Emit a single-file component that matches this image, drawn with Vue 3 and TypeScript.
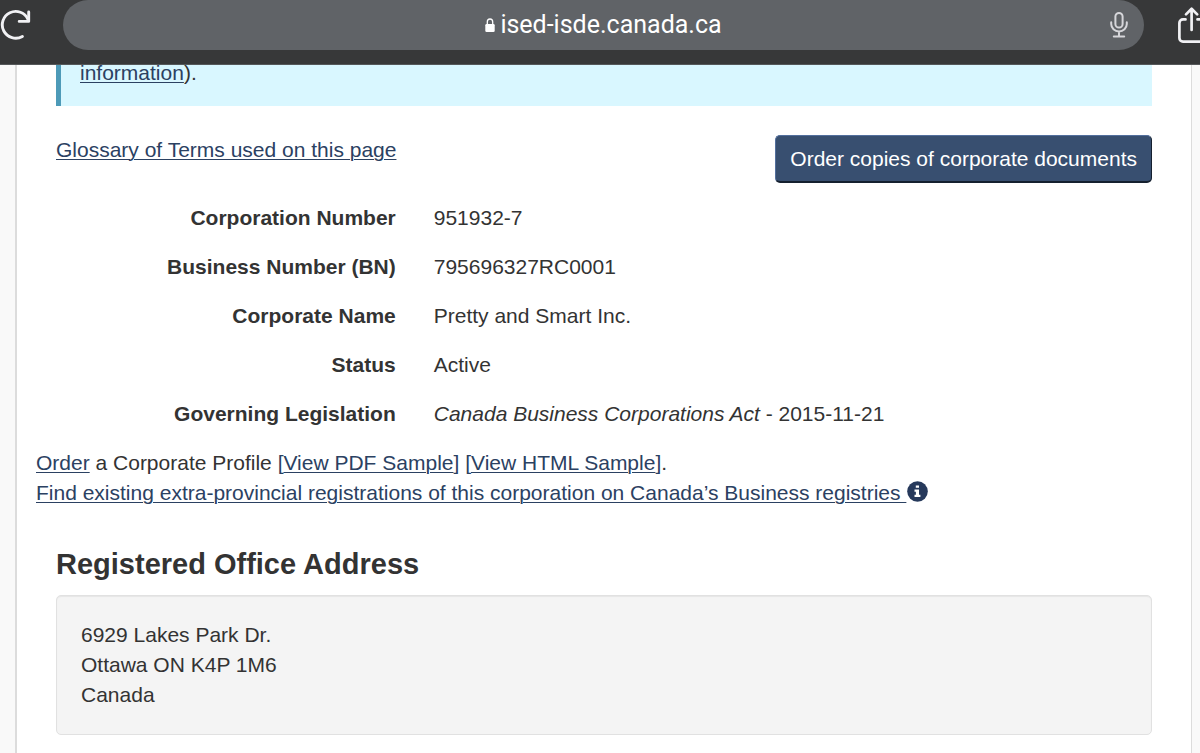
<script setup lang="ts">
interface Detail {
  label: string
  value: string
  act?: string
}

const details: Detail[] = [
  { label: 'Corporation Number', value: '951932-7' },
  { label: 'Business Number (BN)', value: '795696327RC0001' },
  { label: 'Corporate Name', value: 'Pretty and Smart Inc.' },
  { label: 'Status', value: 'Active' },
  { label: 'Governing Legislation', act: 'Canada Business Corporations Act', value: ' - 2015-11-21' },
]

const address: string[] = ['6929 Lakes Park Dr.', 'Ottawa ON K4P 1M6', 'Canada']
</script>

<template>
  <div class="screen">
    <header class="browser">
      <button class="tool reload" type="button" aria-label="Reload">
        <svg width="32" height="50" viewBox="0 0 32 50" fill="none" stroke="#f1f1f4" stroke-width="2.9" stroke-linecap="round" stroke-linejoin="round">
          <path d="M22.4 36.400A13.400 13.400 0 1 1 28 19.500" />
          <path d="M28.700 12v9.400H19.200" />
        </svg>
      </button>
      <div class="address-bar">
        <button class="tool url" type="button">
          <svg width="10" height="14" viewBox="0 0 10 14">
            <path d="M2.3 7V3.9a2.7 2.9 0 0 1 5.4 0V7" fill="none" stroke="#fff" stroke-width="1.3" />
            <rect x="0.3" y="6" width="9.4" height="8" rx="1.3" fill="#fff" />
          </svg>
          <span>ised-isde.canada.ca</span>
        </button>
        <button class="tool mic" type="button" aria-label="Dictate">
          <svg width="22" height="28" viewBox="0 0 22 28" fill="none" stroke="#d6d6da" stroke-width="2" stroke-linecap="round">
            <rect x="7.400" y="2" width="7.200" height="14.600" rx="3.600" />
            <path d="M3.200 11.300v1.700a7.800 7.500 0 0 0 15.600 0v-1.700M11 20.800v4.500M5.800 25.500h10.400" />
          </svg>
        </button>
      </div>
      <button class="tool share" type="button" aria-label="Share">
        <svg width="30" height="40" viewBox="0 0 30 40" fill="none" stroke="#f1f1f4" stroke-width="2.7" stroke-linecap="round" stroke-linejoin="round">
          <path d="M9.500 14.400H7a3.600 3.600 0 0 0-3.600 3.600v15.100A3.600 3.600 0 0 0 7 36.700h17a3.600 3.600 0 0 0 3.600-3.600V18a3.600 3.600 0 0 0-3.600-3.600h-2.500" />
          <path d="M15.600 25V4.500M10 9.400l5.600-5.600 5.600 5.600" />
        </svg>
      </button>
    </header>

    <main class="page">
      <section class="notice"><a href="#">information</a>).</section>

      <div class="actions">
        <a href="#">Glossary of Terms used on this page</a>
        <button class="order" type="button">Order copies of corporate documents</button>
      </div>

      <dl class="details">
        <div v-for="item in details" :key="item.label" class="row">
          <dt>{{ item.label }}</dt>
          <dd><em v-if="item.act">{{ item.act }}</em>{{ item.value }}</dd>
        </div>
      </dl>

      <p class="links">
        <a href="#">Order</a> a Corporate Profile
        <span class="bracket">[</span><a href="#">View PDF Sample</a><span class="bracket">]</span>
        <span class="bracket"> [</span><a href="#">View HTML Sample</a><span class="bracket">]</span>.<br />
        <a href="#">Find existing extra-provincial registrations of this corporation on Canada’s Business registries&nbsp;</a>
        <button class="tool info" type="button" aria-label="More information">
          <svg width="21" height="21" viewBox="0 0 21 21">
            <circle cx="10.500" cy="10.500" r="10.300" fill="#26395b" />
            <path d="M8.800 4.500h3.200V6.800H8.800zM7.500 8.500h4.500v5.200h1.400v2.200H7.500v-2.200h1.400v-3H7.500z" fill="#fff" />
          </svg>
        </button>
      </p>

      <h2>Registered Office Address</h2>
      <address class="well">
        <div v-for="line in address" :key="line">{{ line }}</div>
      </address>
    </main>
  </div>
</template>

<style>
body {
  margin: 0;
  background: #f9f9f9;
}
</style>

<style scoped>
.screen {
  display: flex;
  flex-direction: column;
  min-height: 100vh;
  overflow: hidden;
  color: #333;
  font: 21px/30px "Liberation Sans", Arial, sans-serif;
}

.tool {
  display: flex;
  align-items: center;
  padding: 0;
  border: 0;
  background: none;
  color: inherit;
  font: inherit;
}

.browser {
  display: flex;
  align-items: flex-start;
  height: 64px;
  overflow: hidden;
  background: #373839;
  border-bottom: 1px solid #55585a;
  color: #fff;
}

.reload {
  margin-right: 31px;
}

.address-bar {
  display: grid;
  grid-template-columns: 36px 1fr 36px;
  align-items: center;
  flex: 1;
  height: 50px;
  border-radius: 25px;
  background: #606367;
}

.url {
  grid-column: 2;
  justify-content: center;
  gap: 5px;
  font: 25px/30px Roboto, sans-serif;
}

.share {
  width: 24px;
  margin: 5px 0 0 32px;
  overflow: hidden;
}

.share svg {
  flex: none;
}

.page {
  flex: 1;
  box-sizing: border-box;
  margin: 0 8px 0 15px;
  padding: 0 39px;
  overflow: hidden;
  background: #fff;
  border: solid #dcdcdc;
  border-width: 0 1px 0 2px;
}

a {
  color: #2b4162;
  text-decoration: underline;
  text-underline-offset: 2px;
  text-decoration-thickness: 1px;
}

.notice {
  padding: 0 19px 25px;
  background: #d9f7ff;
  border-left: 5px solid #4d9ab8;
  line-height: 16px;
}

.actions {
  display: flex;
  justify-content: space-between;
  align-items: flex-start;
  margin-top: 29px;
}

.order {
  height: 48px;
  padding: 0 14px;
  border: 1px solid #536f9d;
  border-right-color: #15202f;
  border-bottom: 2px solid #15202f;
  border-radius: 5px;
  background: #384f70;
  color: #fff;
  font: inherit;
}

.details {
  display: grid;
  gap: 19px;
  margin: 20px 0 0;
}

.row {
  display: grid;
  grid-template-columns: 31% 1fr;
  gap: 38px;
}

dt {
  font-weight: bold;
  text-align: right;
}

dd {
  margin: 0;
  white-space: pre-wrap;
}

.links {
  margin: 19px -20px 0;
}

.bracket {
  color: #2b4162;
}

.info {
  display: inline-flex;
  margin-left: 1px;
  vertical-align: -2px;
}

h2 {
  margin: 38px 0 13px;
  font-size: 29px;
  line-height: 36px;
}

.well {
  padding: 24px;
  background: #f4f4f4;
  border: 1px solid #e1e1e1;
  border-radius: 5px;
  box-shadow: inset 0 1px 1px #e6e6e6;
  font-style: normal;
}
</style>
